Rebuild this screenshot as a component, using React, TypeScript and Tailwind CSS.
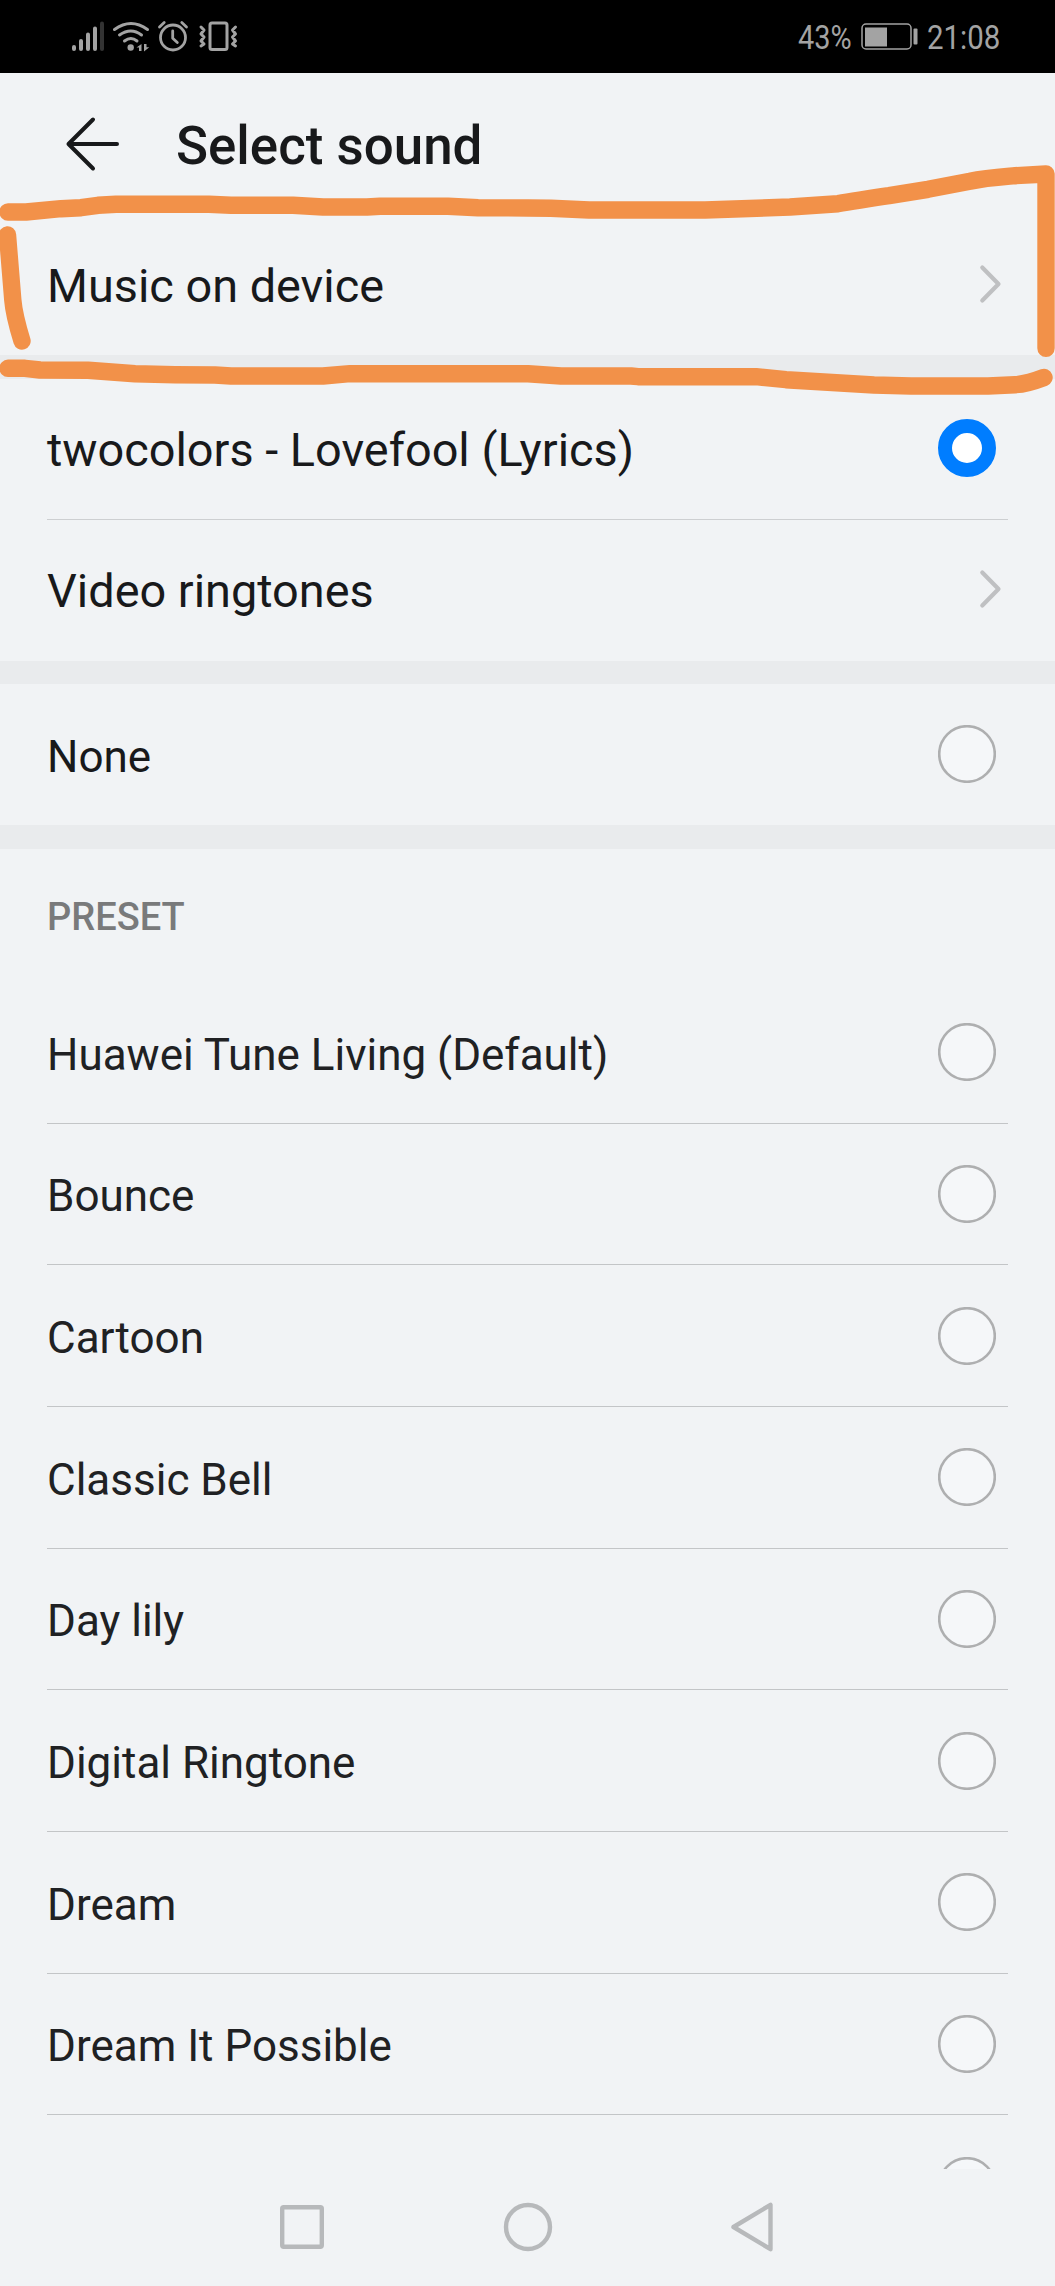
import React from 'react';

const presets = [
  'Huawei Tune Living (Default)',
  'Bounce',
  'Cartoon',
  'Classic Bell',
  'Day lily',
  'Digital Ringtone',
  'Dream',
  'Dream It Possible',
];

const StatusBar = () => {
  return (
    <div className="flex h-[73px] shrink-0 items-start justify-between bg-black text-[#a3a3a3]">
      <svg className="h-[73px] w-[250px]" viewBox="0 0 250 73" fill="none" stroke="currentColor" strokeLinecap="round" strokeLinejoin="round">
        {/* signal */}
        <g strokeWidth="4">
          <path d="M74 47v2M81 41v8M88 34.500v14.500M95 28.500v20.500" />
          <path d="M102 23.500v25.500" stroke="#333333" />
        </g>
        {/* wifi */}
        <g strokeWidth="3">
          <path d="M114.500 29.500Q131 17.500 147.500 29.500" />
          <path d="M119.500 35Q131 27 141.500 35" />
          <path d="M124.500 41Q131 36 137 41" />
        </g>
        <circle cx="130.700" cy="47.500" r="3.200" fill="currentColor" stroke="none" />
        <path d="M141.500 44v7h-2.500v-3.500h-2.500zM144 44h2.500v3.200h2.800l-5.300 4.300z" fill="currentColor" stroke="none" />
        {/* alarm */}
        <circle cx="173" cy="37.500" r="12.500" strokeWidth="2.800" />
        <path d="M172.700 31v7.200l4.600 4.300" strokeWidth="2.800" />
        <path d="M159.500 27l4.700-4.500M186.500 27l-4.700-4.500" strokeWidth="2.800" />
        {/* vibrate */}
        <rect x="210" y="23" width="17" height="26.500" rx="2" strokeWidth="3" />
        <path d="M201 27l3 3-3 4 3 3-3 4 3 3-3 2M235.500 27l-3 3 3 4-3 3 3 4-3 3 3 2" strokeWidth="3" />
      </svg>
      <div className="flex h-[73px] items-center pr-[54px] text-[32.500px] leading-[40px]">
        <span className="mt-[2px] w-[54px] origin-left scale-x-[0.890] whitespace-nowrap">43%</span>
        <svg className="ml-[9px] h-[28px] w-[60px]" viewBox="0 0 60 28" fill="none">
          <rect x="1" y="1" width="49" height="25" rx="4" stroke="currentColor" strokeWidth="1.500" />
          <rect x="4" y="4.500" width="22" height="19" fill="currentColor" />
          <rect x="52.500" y="5.500" width="4" height="16" rx="1" fill="currentColor" />
        </svg>
        <span className="ml-[6px] mt-[2px] w-[74px] origin-left scale-x-[0.905] whitespace-nowrap">21:08</span>
      </div>
    </div>
  );
};

const Chevron = () => (
  <svg className="mb-[2px] mr-[53px] h-[40px] w-[24px]" viewBox="0 0 24 40" fill="none" stroke="#bfc0c2" strokeWidth="4.200" strokeLinecap="round" strokeLinejoin="round">
    <path d="M4.300 3.500L20.500 20 4.300 36.500" />
  </svg>
);

const Radio = ({ checked = false }: { checked?: boolean }) => {
  if (checked) {
    return <span className="mb-[2px] mr-[59px] size-[58px] shrink-0 rounded-full border-[14px] border-[#007dff] bg-white" />;
  }
  return (
    <svg className="mb-[1px] mr-[59px] size-[58px] shrink-0" viewBox="0 0 58 58">
      <circle cx="29" cy="29" r="27.800" fill="#f5f7f9" stroke="#aeafb0" strokeWidth="2.600" />
    </svg>
  );
};

const Row = ({ label, children }: { label: string; children: React.ReactNode }) => (
  <div className="flex h-[141px] shrink-0 items-center justify-between pl-[47px] text-[46.850px] text-[#18191b]">
    <span className="pt-[3px]">{label}</span>
    {children}
  </div>
);

const Band = () => <div className="h-[23.500px] shrink-0 bg-[#e9ebed]" />;

// hand drawn marker around the first row
const Marker = () => (
  <svg className="pointer-events-none absolute left-0 top-0 h-[420px] w-[1055px]" viewBox="0 0 1055 420" fill="none" stroke="#f29149" strokeWidth="17.400" strokeLinecap="round" strokeLinejoin="round">
    <path d="M8 212L26 212L61 208.700L81 207.700L98 205.300L116 204.300L209 204.300L231 205.200L293 205.200L323 207L367 207L380 206.200L448 206.200L478 207.700L528 208L551 208.300L589 210L705 210L742 208.700L790 207L838 203.700C856 201 872 198 889 195.700L928 189.300L970 181.300C985 178 1000 177 1015 175.700L1046 174V348.300" />
    <path d="M7.500 235L12.800 300Q14 315 22 341" />
    <path d="M8 368.300L25 368.300L40 370L88 370.300L135 373.700L175 374.700L215 375L231 376L323 376L350 373.700L528 373.700L561 376L631 376L638 376.700L756 376.700L786 379.700L874 385L911 386L988 386L1015 384.700Q1027 384 1044 377.500" />
  </svg>
);

const NavBar = () => (
  <div className="flex h-[117px] shrink-0 items-center justify-center gap-[172px] pb-[1px]">
    <svg className="size-[54px]" viewBox="0 0 54 54" fill="none" stroke="#b7b9bb" strokeWidth="4.400" strokeLinejoin="round">
      <rect x="7.200" y="7.200" width="39.600" height="39.600" rx="1.500" />
    </svg>
    <svg className="size-[54px]" viewBox="0 0 54 54" fill="none" stroke="#b7b9bb" strokeWidth="4.400">
      <circle cx="27" cy="27" r="22" />
    </svg>
    <svg className="size-[54px]" viewBox="0 0 54 54" fill="none" stroke="#b7b9bb" strokeWidth="4.400" strokeLinejoin="round">
      <path d="M43.500 4.800V49.200L6.500 27Z" />
    </svg>
  </div>
);

const App = () => {
  return (
    <div className="relative flex h-[2286px] w-[1055px] flex-col overflow-hidden bg-[#f1f3f5] font-['Roboto',sans-serif]">
      <StatusBar />
      <div className="flex h-[141px] shrink-0 items-center pl-[65px]">
        <svg className="h-[56px] w-[56px]" viewBox="0 0 56 56" fill="none" stroke="#18191b" strokeWidth="4" strokeLinecap="round" strokeLinejoin="round">
          <path d="M28 3.500L3.500 28 28 52.500M3.500 28H52" />
        </svg>
        <h1 className="ml-[55px] pt-[6px] text-[52.900px] font-medium text-[#18191b]">Select sound</h1>
      </div>
      <Row label="Music on device">
        <Chevron />
      </Row>
      <Band />
      <Row label="twocolors - Lovefool (Lyrics)">
        <Radio checked />
      </Row>
      <div className="-mt-px ml-[47px] mr-[47px] h-px shrink-0 bg-[#cdcfd1]" />
      <Row label="Video ringtones">
        <Chevron />
      </Row>
      <Band />
      <div className="flex h-[141px] shrink-0 items-center justify-between pl-[47px] text-[44px] text-[#18191b]">
        <span className="pt-[4px]">None</span>
        <Radio />
      </div>
      <Band />
      <h2 className="h-[133.500px] shrink-0 pl-[47px] pt-[43px] text-[38px] leading-[50px] font-medium text-[#797a7b]">PRESET</h2>
      <div className="flex h-[1187.500px] flex-col overflow-hidden">
        {presets.map((name) => (
          <div key={name} className="relative flex h-[141.670px] shrink-0 items-center justify-between pl-[47px] text-[44px] text-[#202123]">
            <span className="pt-[4px]">{name}</span>
            <Radio />
            <div className="absolute bottom-0 left-[47px] right-[47px] h-px bg-[#c3c5c7]" />
          </div>
        ))}
        <div className="flex h-[141.670px] shrink-0 items-center justify-end">
          <Radio />
        </div>
      </div>
      <NavBar />
      <Marker />
    </div>
  );
};

export default App;
